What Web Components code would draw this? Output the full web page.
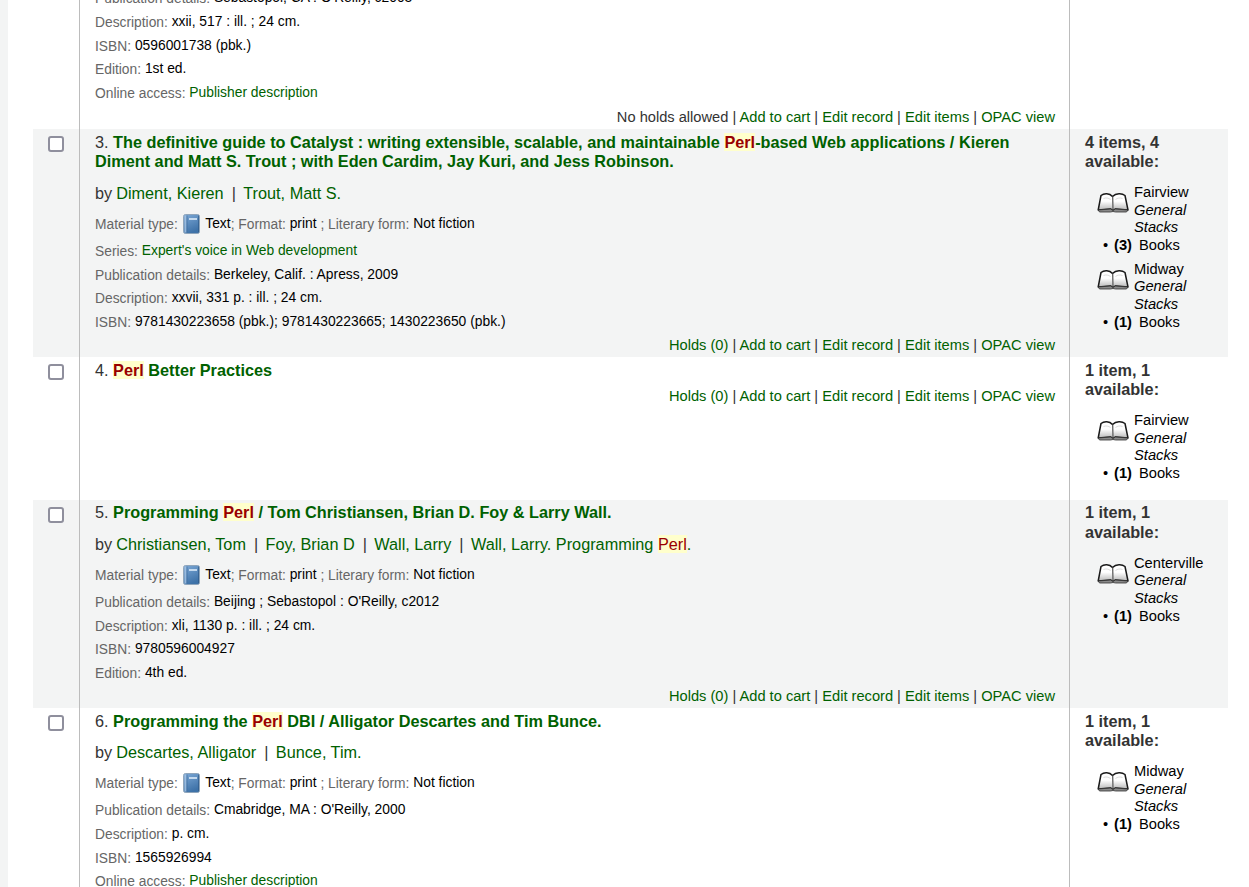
<!DOCTYPE html>
<html lang="en">
<head>
<meta charset="utf-8">
<title>Search results</title>
<style>
html, body { margin: 0; height: 887px; overflow: hidden; background: #f3f4f4; }
body { padding-left: 8px; font-family: "Liberation Sans", Arial, sans-serif; color: #333; }
a { color: #006100; text-decoration: none; }
</style>
</head>
<body>
<template id="row-tpl">
  <style>
    :host { display: grid; grid-template-columns: 47px 990px 158px; padding-left: 25px; width: 1195px; }
    :host([shaded]) .cell { background: #f3f4f4; }
    .cell { min-width: 0; box-sizing: border-box; }
    .select { display: flex; justify-content: center; padding-top: 7px; border-right: 1px solid #bcbcbc; }
    .select input { appearance: none; margin: 0; width: 16px; height: 16px; box-sizing: border-box; border: 2px solid #8f8f9d; border-radius: 3px; background: #fff; }
    .main { padding: 3.7px 14px 0 15px; border-right: 1px solid #bcbcbc; }
    .head { font-size: 16.25px; line-height: 19.7px; min-height: 19.7px; }
    .head .num { color: #333; }
    .avail { padding: 3.7px 10px 0 15px; }
    .avail .count { font-size: 16.25px; font-weight: bold; line-height: 19.7px; margin-bottom: 11.9px; }
    ::slotted([slot=title]) { font-weight: bold; color: #006100; }
  </style>
  <div class="cell select"><input type="checkbox"></div>
  <div class="cell main">
    <div class="head" part="head"><span class="num"></span><slot name="title"></slot></div>
    <slot></slot>
  </div>
  <div class="cell avail">
    <div class="count"></div>
    <slot name="avail"></slot>
  </div>
</template>

<template id="byline-tpl">
  <style>
    :host { display: block; font-size: 16.25px; line-height: 22px; margin-top: 9.8px; margin-bottom: 6.1px; color: #333; }
    ::slotted(a) { color: #006100; }
    ::slotted(by-sep) { margin: 0 7.4px 0 8px; }
    .by { margin-right: -.5px; }
  </style>
  <span class="by">by</span> <slot></slot>
</template>

<template id="detail-tpl">
  <style>
    :host { display: block; font-size: 13.83px; line-height: 24px; height: 23.7px; color: #000; }
    .label { color: #666; font-size: 13.8px; position: relative; top: 1px; }
    ::slotted(a) { color: #006100; }
  </style>
  <span class="label"></span> <slot></slot>
</template>

<template id="material-tpl">
  <style>
    :host { display: block; font-size: 13.83px; height: 28px; line-height: 27px; color: #000; white-space: nowrap; }
    .label { color: #666; font-size: 13.8px; position: relative; top: 1px; }
    svg { width: 17px; height: 20px; vertical-align: -6px; margin: 0 2px 0 1px; }
  </style>
  <span class="label">Material type:</span>
  <svg viewBox="0 0 17 20" aria-hidden="true">
    <defs><linearGradient id="b" x1="0" x2=".4" y1="0" y2="1"><stop offset="0" stop-color="#7ca8d6"/><stop offset="1" stop-color="#3e72a8"/></linearGradient></defs>
    <rect x=".5" y=".5" width="16" height="19" rx="2" fill="url(#b)" stroke="#8fa5bb"/>
    <rect x="1.500" y="1.500" width="2" height="17" fill="#a9c6e4" opacity=".8"/>
    <rect x="3.500" y="1.500" width="1" height="17" fill="#3f6d9c" opacity=".7"/>
    <rect x="6" y="4" width="8" height="2" fill="#c4d9ee"/>
    <rect x="15" y="1.500" width="1" height="17" fill="#2f5a88" opacity=".7"/>
  </svg>
  Text<span class="label">; Format:</span> print <span class="label">; Literary form:</span> Not fiction
</template>

<template id="actions-tpl">
  <style>
    :host { display: block; text-align: right; font-size: 14.65px; line-height: 24px; margin-top: .2px; color: #333; }
    ::slotted(a) { color: #006100; }
  </style>
  <slot></slot>
</template>

<template id="term-tpl"><style>
    :host { display: inline; background: #ffc; color: #990000; }
  </style><slot></slot></template>

<template id="sep-tpl"><style>
    :host { display: inline; color: #333; }
  </style>|</template>

<template id="branch-tpl">
  <style>
    :host { display: block; font-size: 14.7px; line-height: 17.7px; color: #000; margin-bottom: 6px; }
    .top { display: flex; padding-left: 12px; }
    svg { width: 32px; height: 21px; margin: 8px 5px 0 0; flex: none; }
    i { display: block; }
    .copies { display: flex; gap: 6px; margin-left: 18px; }
    .copies b { font-weight: bold; margin-right: 1px; }
    .dot { width: 12px; margin-right: -7px; }
  </style>
  <div class="top">
    <svg viewBox="0 0 32 21" aria-hidden="true">
      <defs><linearGradient id="pg" x1="0" x2="0" y1="0" y2="1"><stop offset=".45" stop-color="#fff"/><stop offset="1" stop-color="#b5b5b5"/></linearGradient></defs>
      <path d="M1.200 18 4 3.500C7 1 12.500 1 15.500 4.500 19 1 25 1 28 3.500L31 18 18.500 17 16 18.500 13.500 17Z" fill="url(#pg)" stroke="#1a1a1a" stroke-width="1.500" stroke-linejoin="round"/>
      <path d="M15.700 4.500 16 18" stroke="#555" stroke-width="1.200"/>
      <path d="M6.500 6.500c2.500-1 5-.5 7 1M25.500 6.500c-2.500-1-5-.5-7 1" fill="none" stroke="#ddd" stroke-width="1"/>
      <path d="M1.200 18 2.500 20H13.500L16 19.500 18.500 20H29.500L31 18 18.500 17 16 18.500 13.500 17Z" fill="#8a8a8a" stroke="#333" stroke-width=".8"/>
    </svg>
    <div><span class="name"></span><i class="loc"></i></div>
  </div>
  <div class="copies"><span class="dot">•</span><b class="n"></b><span>Books</span></div>
</template>

<div style="background:#fff; margin-top:-38.1px; height:930px; overflow:hidden;">
  <result-row>
    <result-detail label="Publication details:">Sebastopol, CA : O'Reilly, c2003</result-detail>
    <result-detail label="Description:">xxii, 517 : ill. ; 24 cm.</result-detail>
    <result-detail label="ISBN:">0596001738 (pbk.)</result-detail>
    <result-detail label="Edition:">1st ed.</result-detail>
    <result-detail label="Online access:"><a href="#">Publisher description</a></result-detail>
    <result-actions style="margin-top:1.2px">No holds allowed | <a href="#">Add to cart</a> | <a href="#">Edit record</a> | <a href="#">Edit items</a> | <a href="#">OPAC view</a></result-actions>
  </result-row>

  <result-row number="3" count="4 items, 4 available:" shaded>
    <a slot="title" href="#">The definitive guide to Catalyst : writing extensible, scalable, and maintainable <search-term>Perl</search-term>-based Web applications / Kieren Diment and Matt S. Trout ; with Eden Cardim, Jay Kuri, and Jess Robinson.</a>
    <result-byline><a href="#">Diment, Kieren</a><by-sep></by-sep><a href="#">Trout, Matt S.</a></result-byline>
    <result-material></result-material>
    <result-detail label="Series:"><a href="#">Expert's voice in Web development</a></result-detail>
    <result-detail label="Publication details:">Berkeley, Calif. : Apress, 2009</result-detail>
    <result-detail label="Description:">xxvii, 331 p. : ill. ; 24 cm.</result-detail>
    <result-detail label="ISBN:">9781430223658 (pbk.); 9781430223665; 1430223650 (pbk.)</result-detail>
    <result-actions><a href="#">Holds (0)</a> | <a href="#">Add to cart</a> | <a href="#">Edit record</a> | <a href="#">Edit items</a> | <a href="#">OPAC view</a></result-actions>
    <branch-item slot="avail" name="Fairview" copies="3"></branch-item>
    <branch-item slot="avail" name="Midway" copies="1"></branch-item>
  </result-row>

  <result-row number="4" count="1 item, 1 available:">
    <a slot="title" href="#"><search-term>Perl</search-term> Better Practices</a>
    <result-actions style="margin-top:4px"><a href="#">Holds (0)</a> | <a href="#">Add to cart</a> | <a href="#">Edit record</a> | <a href="#">Edit items</a> | <a href="#">OPAC view</a></result-actions>
    <branch-item slot="avail" name="Fairview" copies="1" style="margin-bottom:17px"></branch-item>
  </result-row>

  <result-row number="5" count="1 item, 1 available:" shaded>
    <a slot="title" href="#">Programming <search-term>Perl</search-term> / Tom Christiansen, Brian D. Foy &amp; Larry Wall.</a>
    <result-byline><a href="#">Christiansen, Tom</a><by-sep></by-sep><a href="#">Foy, Brian D</a><by-sep></by-sep><a href="#">Wall, Larry</a><by-sep></by-sep><a href="#">Wall, Larry. Programming <search-term>Perl</search-term>.</a></result-byline>
    <result-material></result-material>
    <result-detail label="Publication details:">Beijing ; Sebastopol : O'Reilly, c2012</result-detail>
    <result-detail label="Description:">xli, 1130 p. : ill. ; 24 cm.</result-detail>
    <result-detail label="ISBN:">9780596004927</result-detail>
    <result-detail label="Edition:">4th ed.</result-detail>
    <result-actions><a href="#">Holds (0)</a> | <a href="#">Add to cart</a> | <a href="#">Edit record</a> | <a href="#">Edit items</a> | <a href="#">OPAC view</a></result-actions>
    <branch-item slot="avail" name="Centerville" copies="1"></branch-item>
  </result-row>

  <result-row number="6" count="1 item, 1 available:">
    <a slot="title" href="#">Programming the <search-term>Perl</search-term> DBI / Alligator Descartes and Tim Bunce.</a>
    <result-byline><a href="#">Descartes, Alligator</a><by-sep></by-sep><a href="#">Bunce, Tim.</a></result-byline>
    <result-material></result-material>
    <result-detail label="Publication details:">Cmabridge, MA : O'Reilly, 2000</result-detail>
    <result-detail label="Description:">p. cm.</result-detail>
    <result-detail label="ISBN:">1565926994</result-detail>
    <result-detail label="Online access:"><a href="#">Publisher description</a></result-detail>
    <branch-item slot="avail" name="Midway" copies="1"></branch-item>
  </result-row>
</div>

<script>
function attachTemplate(el, id) {
    const root = el.attachShadow({ mode: "open" });
    root.appendChild(document.getElementById(id).content.cloneNode(true));
    return root;
}

class ResultRow extends HTMLElement {
    constructor() {
        super();
        const root = attachTemplate(this, "row-tpl");
        const number = this.getAttribute("number");
        root.querySelector(".num").textContent = number ? number + ". " : "";
        root.querySelector(".count").textContent = this.getAttribute("count") ?? "";
    }
}

class ResultByline extends HTMLElement {
    constructor() {
        super();
        attachTemplate(this, "byline-tpl");
    }
}

class BySep extends HTMLElement {
    constructor() {
        super();
        attachTemplate(this, "sep-tpl");
    }
}

class ResultDetail extends HTMLElement {
    constructor() {
        super();
        const root = attachTemplate(this, "detail-tpl");
        root.querySelector(".label").textContent = this.getAttribute("label");
    }
}

class ResultMaterial extends HTMLElement {
    constructor() {
        super();
        attachTemplate(this, "material-tpl");
    }
}

class ResultActions extends HTMLElement {
    constructor() {
        super();
        attachTemplate(this, "actions-tpl");
    }
}

class SearchTerm extends HTMLElement {
    constructor() {
        super();
        attachTemplate(this, "term-tpl");
    }
}

class BranchItem extends HTMLElement {
    constructor() {
        super();
        const root = attachTemplate(this, "branch-tpl");
        root.querySelector(".name").textContent = this.getAttribute("name");
        root.querySelector(".loc").textContent = this.getAttribute("location") ?? "General Stacks";
        root.querySelector(".n").textContent = "(" + this.getAttribute("copies") + ")";
    }
}

customElements.define("result-row", ResultRow);
customElements.define("result-byline", ResultByline);
customElements.define("by-sep", BySep);
customElements.define("result-detail", ResultDetail);
customElements.define("result-material", ResultMaterial);
customElements.define("result-actions", ResultActions);
customElements.define("search-term", SearchTerm);
customElements.define("branch-item", BranchItem);
</script>
</body>
</html>
